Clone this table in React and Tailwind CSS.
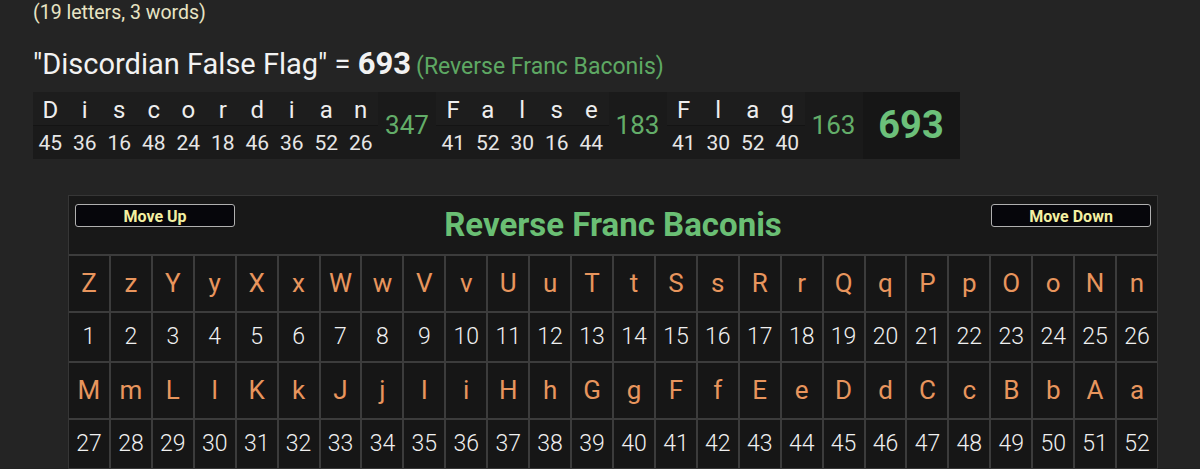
import React from 'react';

const words = [
  { letters: ['D', 'i', 's', 'c', 'o', 'r', 'd', 'i', 'a', 'n'], values: [45, 36, 16, 48, 24, 18, 46, 36, 52, 26], sum: 347 },
  { letters: ['F', 'a', 'l', 's', 'e'], values: [41, 52, 30, 16, 44], sum: 183 },
  { letters: ['F', 'l', 'a', 'g'], values: [41, 30, 52, 40], sum: 163 },
];

const row1 = ['Z', 'z', 'Y', 'y', 'X', 'x', 'W', 'w', 'V', 'v', 'U', 'u', 'T', 't', 'S', 's', 'R', 'r', 'Q', 'q', 'P', 'p', 'O', 'o', 'N', 'n'];
const row2 = ['M', 'm', 'L', 'l', 'K', 'k', 'J', 'j', 'I', 'i', 'H', 'h', 'G', 'g', 'F', 'f', 'E', 'e', 'D', 'd', 'C', 'c', 'B', 'b', 'A', 'a'];

const LetterRow = ({ letters }) => (
  <>
    {letters.map((l, i) => (
      <div key={l + i} className="h-[55px] bg-[#161616] flex items-center justify-center text-[26px] text-[#e8955d]">
        {l}
      </div>
    ))}
  </>
);

const NumberRow = ({ start }) => (
  <>
    {Array.from({ length: 26 }, (_, i) => (
      <div key={i} className="h-[48px] bg-[#161616] flex items-center justify-center text-[23px] font-light text-[#f0f0f0]">
        {start + i}
      </div>
    ))}
  </>
);

const App = () => {
  return (
    <div className="w-[1200px] h-[469px] overflow-hidden bg-[#242424] pl-[33px]" style={{ fontFamily: 'Roboto, "Liberation Sans", sans-serif' }}>
      <div className="h-[28px] leading-[26px] text-[19.5px] text-[#e8e4c4]">(19 letters, 3 words)</div>

      <div className="mt-[13px] h-[39px] flex items-baseline text-[29px] text-[#f2f2f2]">
        <span>"Discordian False Flag" =&nbsp;</span>
        <span className="font-bold text-[31px]">693</span>
        <span className="ml-[5px] text-[23px] text-[#5ea863]">(Reverse Franc Baconis)</span>
      </div>

      <div className="mt-3 inline-flex bg-[#141414] h-[67px]">
        {words.map((w, wi) => (
          <React.Fragment key={wi}>
            {w.letters.map((l, i) => (
              <div key={i} className="w-[34.5px] flex flex-col gap-px">
                <div className="h-[33px] bg-[#1d1d1d] flex items-center justify-center pt-[3px] text-[24px] text-[#eeeeee]">{l}</div>
                <div className="h-[33px] bg-[#1a1a1a] flex items-center justify-center pt-[3px] text-[21px] text-[#e6e6e6]">{w.values[i]}</div>
              </div>
            ))}
            <div className="w-[58px] bg-[#1a1a1a] flex items-center justify-center text-[26px] text-[#63ad69]">{w.sum}</div>
          </React.Fragment>
        ))}
        <div className="w-[97px] bg-[#161616] flex items-center justify-center text-[38px] font-bold text-[#6cc07a]">693</div>
      </div>

      <div className="mt-[36px] ml-[35px] w-[1090px] border border-[#363636] bg-[#181818]">
        <div className="h-[58px] relative flex items-center justify-center">
          <button className="absolute left-[6px] top-[8px] w-[160px] h-[23px] rounded-[3px] border border-[#b0b0b0] bg-[#06060b] text-[16px] font-bold text-[#f3f0a2]">
            Move Up
          </button>
          <div className="text-[33px] font-bold text-[#6abf74]">Reverse Franc Baconis</div>
          <button className="absolute right-[6px] top-[8px] w-[160px] h-[23px] rounded-[3px] border border-[#b0b0b0] bg-[#06060b] text-[16px] font-bold text-[#f3f0a2]">
            Move Down
          </button>
        </div>
        <div className="grid grid-cols-[repeat(26,minmax(0,1fr))] gap-[2px] bg-[#3c3c3c] border-t-2 border-[#3c3c3c]">
          <LetterRow letters={row1} />
          <NumberRow start={1} />
          <LetterRow letters={row2} />
          <NumberRow start={27} />
        </div>
      </div>
    </div>
  );
};

export default App;
